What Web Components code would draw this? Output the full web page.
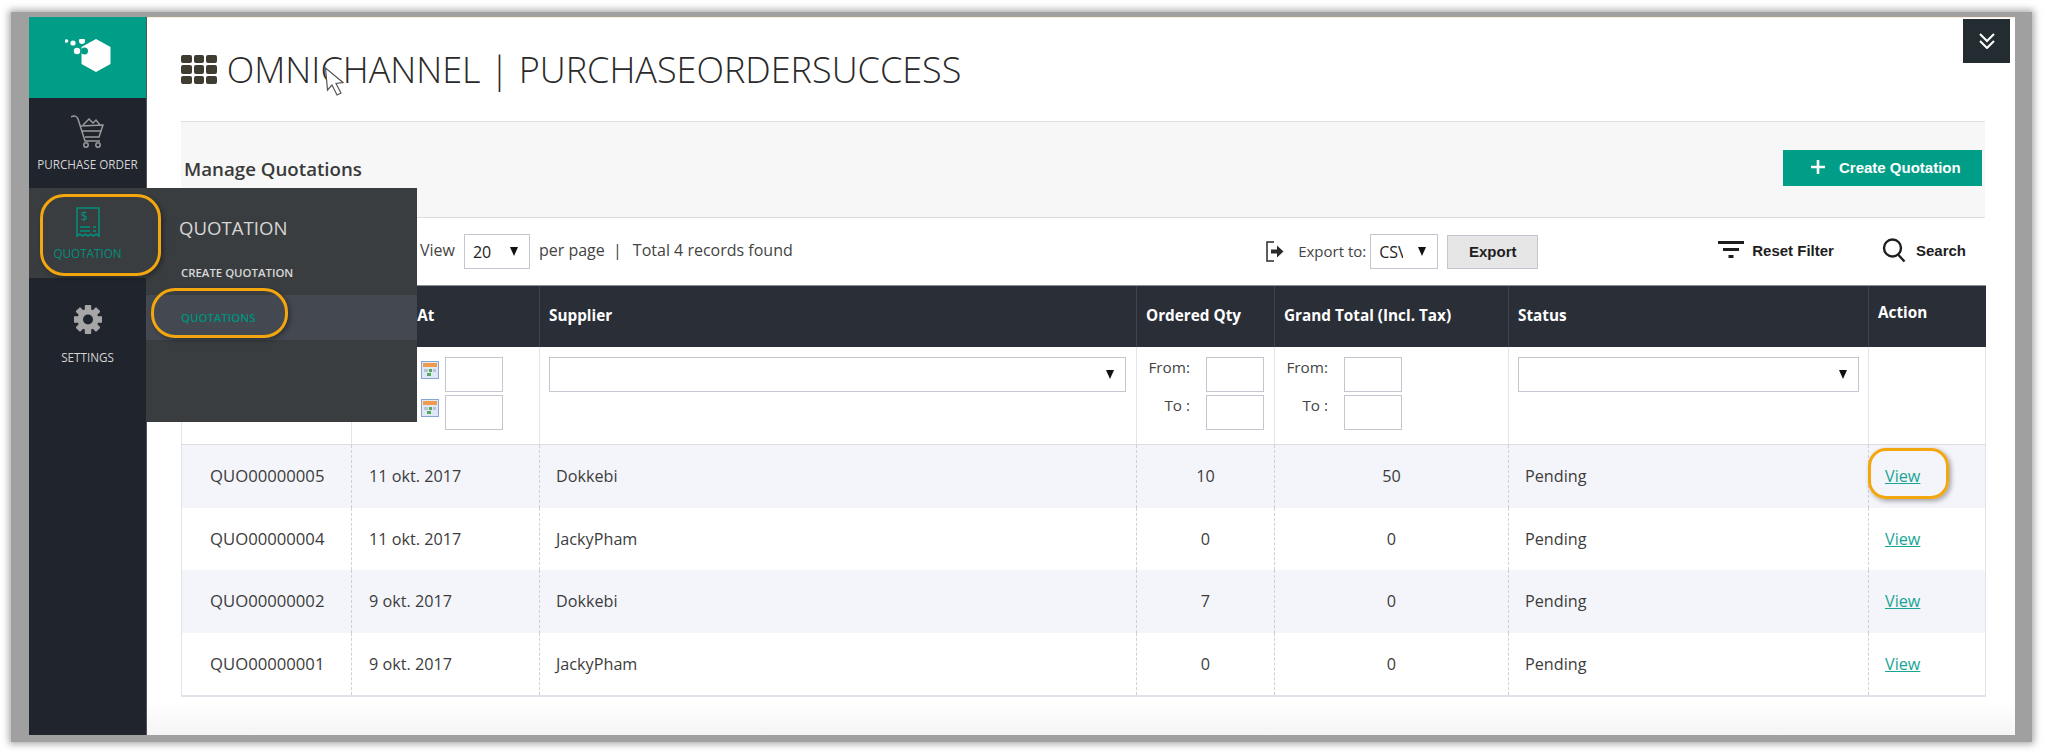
<!DOCTYPE html>
<html>
<head>
<meta charset="utf-8">
<title>Manage Quotations</title>
<style>
  html, body { margin: 0; padding: 0; background: #fff; }
  body { font-family: "Open Sans", sans-serif; color: #3c3c3c; overflow: hidden; }
</style>
</head>
<body>

<app-frame>
  <side-nav slot="nav">
    <nav-item style="--top:17px;--gap:9px">
      <svg slot="icon" width="33" height="33" viewBox="0 0 33 33" fill="none" stroke="#9b9b9b" stroke-width="1.5">
        <path d="M0 2c3-2 6-1 7 2l7 22h15"/>
        <path d="M9 11l23-1-4 12H14"/>
        <path d="M12 10l6-6 4 4 3-3 4 5"/>
        <path d="M11 16h19"/>
        <circle cx="15" cy="30" r="2.2"/>
        <circle cx="27" cy="30" r="2.2"/>
      </svg>
      PURCHASE ORDER
    </nav-item>
    <nav-item active style="--top:19px;--gap:8px">
      <svg slot="icon" width="24" height="31" viewBox="0 0 24 31" fill="none" stroke="#00917c" stroke-width="1.5">
        <path d="M1 1h22v28l-2.75-1.8-2.75 1.8-2.75-1.8-2.75 1.8-2.75-1.8-2.75 1.8-2.75-1.8L1 29z"/>
        <text x="4.500" y="14" font-family="Open Sans" font-size="13" fill="#00917c" stroke="none">$</text>
        <path d="M4 20h10M4 24h10M17 20h3M17 24h3"/>
      </svg>
      QUOTATION
    </nav-item>
    <nav-item style="--top:27px;--gap:16px">
      <svg slot="icon" width="28" height="29" viewBox="-14 -14.5 28 29" fill="#a6a6a6">
        <rect x="-3.2" y="-14.5" width="6.4" height="29" rx="1"/>
        <rect x="-3.2" y="-14.5" width="6.4" height="29" rx="1" transform="rotate(45)"/>
        <rect x="-3.2" y="-14.5" width="6.4" height="29" rx="1" transform="rotate(90)"/>
        <rect x="-3.2" y="-14.5" width="6.4" height="29" rx="1" transform="rotate(135)"/>
        <circle r="10.5"/>
        <circle r="5" fill="#20242d"/>
      </svg>
      SETTINGS
    </nav-item>
    <fly-menu slot="fly" heading="QUOTATION">
      <fly-link>CREATE QUOTATION</fly-link>
      <fly-link active>QUOTATIONS</fly-link>
    </fly-menu>
  </side-nav>

  <page-title>OMNICHANNEL | PURCHASEORDERSUCCESS</page-title>
  <panel-head>Manage Quotations</panel-head>
  <tool-bar></tool-bar>
  <quote-table></quote-table>

  <toggle-button slot="over"></toggle-button>
  <mouse-cursor slot="over"></mouse-cursor>
  <call-out slot="over" style="left:11px;top:177px;width:121px;height:82px;border-radius:24px"></call-out>
  <call-out slot="over" style="left:122px;top:271px;width:137px;height:50px;border-radius:24px"></call-out>
  <call-out slot="over" style="left:1839px;top:431px;width:81px;height:51px;border-radius:18px"></call-out>
</app-frame>

<script>
// frame = grey screenshot border, sidebar on the left, page content on the right
class AppFrame extends HTMLElement {
  constructor() {
    super();
    this.attachShadow({ mode: "open" });
    this.shadowRoot.innerHTML = `
      <style>
        :host {
          display: block;
          margin: 12px 13px 10px 11px;
          padding: 5px 17px 7px 18px;
          background: #a0a0a0;
          box-shadow: 0 0 7px 2px rgba(110,110,110,.6);
        }
        #app {
          position: relative;
          display: flex;
          height: 718px;
        }
        #main {
          flex: 1;
          min-width: 0;
          box-sizing: border-box;
          padding: 0 30px 0 34px;
          border-top: 1px solid #fbeed5;
          background: linear-gradient(#fff 683px, #f5f5f5 100%);
        }
      </style>
      <div id="app">
        <slot name="nav"></slot>
        <div id="main"><slot></slot></div>
        <slot name="over"></slot>
      </div>
    `;
  }
}

class SideNav extends HTMLElement {
  constructor() {
    super();
    this.attachShadow({ mode: "open" });
    this.shadowRoot.innerHTML = `
      <style>
        :host {
          display: block;
          position: relative;
          flex: none;
          width: 118px;
          box-sizing: border-box;
          background: #20242d;
          border-right: 1px solid #50545a;
        }
        #logo {
          height: 81px;
          background: #009e87;
          display: flex;
          align-items: center;
          justify-content: center;
        }
      </style>
      <div id="logo">
        <svg width="46" height="33" viewBox="0 0 46 33" fill="#fff" style="margin-left:1px;margin-bottom:4px">
          <path d="M31 0l14.5 8v17L31 33l-14.500-8V8z"/>
          <circle cx="19.500" cy="12" r="3.500" fill="#009e87"/>
          <circle cx="1.500" cy="2" r="1.800"/>
          <circle cx="8" cy="4" r="2.600"/>
          <circle cx="17" cy="2" r="3"/>
          <circle cx="12" cy="12" r="3.200"/>
        </svg>
      </div>
      <slot></slot>
      <slot name="fly"></slot>
    `;
  }
}

class NavItem extends HTMLElement {
  constructor() {
    super();
    this.attachShadow({ mode: "open" });
    this.shadowRoot.innerHTML = `
      <style>
        :host {
          display: flex;
          flex-direction: column;
          align-items: center;
          box-sizing: border-box;
          height: 90px;
          padding-top: var(--top, 17px);
          font: 400 11.700px/14px "Open Sans", sans-serif;
          color: #d4d4d4;
          white-space: nowrap;
        }
        :host([active]) {
          background: #3a3d40;
          color: #00917c;
        }
        ::slotted(svg) { display: block; margin-bottom: var(--gap, 8px); }
      </style>
      <slot name="icon"></slot>
      <slot></slot>
    `;
  }
}

class FlyMenu extends HTMLElement {
  constructor() {
    super();
    this.attachShadow({ mode: "open" });
    this.shadowRoot.innerHTML = `
      <style>
        :host {
          position: absolute;
          left: 117px;
          top: 171px;
          width: 271px;
          height: 234px;
          box-sizing: border-box;
          padding-top: 28px;
          background: #3a3d40;
          z-index: 5;
        }
        h2 {
          margin: 0 0 10px 33px;
          font: 400 18.600px/24px "Open Sans", sans-serif;
          color: #d6d6d6;
        }
      </style>
      <h2></h2>
      <slot></slot>
    `;
    this.shadowRoot.querySelector("h2").textContent = this.getAttribute("heading");
  }
}

class FlyLink extends HTMLElement {
  constructor() {
    super();
    this.attachShadow({ mode: "open" });
    this.shadowRoot.innerHTML = `
      <style>
        :host {
          display: flex;
          align-items: center;
          height: 45px;
          padding-left: 35px;
          font: 600 11.400px/14px "Open Sans", sans-serif;
          color: #d8d8d8;
        }
        :host([active]) { background: #444850; color: #00917c; }
      </style>
      <slot></slot>
    `;
  }
}

class PageTitle extends HTMLElement {
  constructor() {
    super();
    this.attachShadow({ mode: "open" });
    this.shadowRoot.innerHTML = `
      <style>
        :host {
          display: flex;
          align-items: center;
          gap: 10px;
          height: 103px;
          font: 300 36px/40px "Open Sans", sans-serif;
          color: #2a2a2a;
          white-space: nowrap;
        }
        #grid {
          display: grid;
          grid-template-columns: repeat(3, 10.600px);
          grid-auto-rows: 8.600px;
          gap: 2px;
          flex: none;
        }
        #grid i { background: #3f3c32; border-radius: 2px; }
      </style>
      <div id="grid"><i></i><i></i><i></i><i></i><i></i><i></i><i></i><i></i><i></i></div>
      <slot></slot>
    `;
  }
}

class PanelHead extends HTMLElement {
  constructor() {
    super();
    this.attachShadow({ mode: "open" });
    this.shadowRoot.innerHTML = `
      <style>
        :host {
          display: flex;
          align-items: center;
          justify-content: space-between;
          box-sizing: border-box;
          height: 97px;
          padding: 0 3px 1px 3px;
          background: #f7f7f7;
          border-top: 1px solid #dcdce2;
          border-bottom: 1px solid #dcdce2;
          font: 600 18.700px/24px "Open Sans", sans-serif;
          color: #3a3a3a;
        }
        button {
          display: flex;
          align-items: center;
          box-sizing: border-box;
          width: 199px;
          height: 36px;
          margin-bottom: 2px;
          padding: 0 0 2px 28px;
          gap: 14px;
          border: 0;
          background: #009e87;
          color: #fff;
          font: 700 15px "Liberation Sans", sans-serif;
        }
      </style>
      <slot></slot>
      <button>
        <svg width="14" height="14" viewBox="0 0 14 14" stroke="#fff" stroke-width="2.600"><path d="M7 0v14M0 7h14"/></svg>
        Create Quotation
      </button>
    `;
  }
}

class DropBox extends HTMLElement {
  constructor() {
    super();
    this.attachShadow({ mode: "open" });
    this.shadowRoot.innerHTML = `
      <style>
        :host {
          display: flex;
          align-items: center;
          box-sizing: border-box;
          height: 35px;
          padding: 0 11px 0 8px;
          border: 1px solid #c4c6cf;
          background: #fff;
          font: 400 16px "Open Sans", sans-serif;
          color: #222;
        }
        #val { flex: 1; overflow: hidden; white-space: nowrap; min-width: 0; }
        svg { flex: none; margin-left: 8px; }
      </style>
      <span id="val"><slot></slot></span>
      <svg width="8" height="9" viewBox="0 0 8 9"><path d="M0 0h8L4 9z" fill="#111"/></svg>
    `;
  }
}

class ToolBar extends HTMLElement {
  constructor() {
    super();
    this.attachShadow({ mode: "open" });
    this.shadowRoot.innerHTML = `
      <style>
        :host {
          display: flex;
          align-items: center;
          box-sizing: border-box;
          height: 67px;
          padding: 0 19px 0 239px;
          font: 400 16px "Open Sans", sans-serif;
          color: #444;
          white-space: nowrap;
        }
        .gap { flex: 1; }
        .lift { margin-bottom: 3px; }
        .tool {
          display: flex;
          align-items: center;
          margin-bottom: 3px;
          font: 700 15px "Liberation Sans", sans-serif;
          color: #1e1e1e;
        }
        #export {
          box-sizing: border-box;
          width: 91px;
          height: 34px;
          margin-left: 9px;
          border: 1px solid #c4c6cf;
          background: #e6e6e6;
          font: 700 15px "Liberation Sans", sans-serif;
          color: #1e1e1e;
        }
        #to { font-size: 15px; margin: 0 4px 2px 14px; }
        #csv { display: inline-block; width: 24px; overflow: hidden; vertical-align: bottom; }
      </style>
      <span class="lift">View</span>
      <drop-box style="width:66px;margin:0 9px"><span>20</span></drop-box>
      <span class="lift">per page &nbsp;|&nbsp;&nbsp;&thinsp;Total 4 records found</span>
      <span class="gap"></span>
      <svg width="18" height="21" viewBox="0 0 18 21" fill="none" stroke="#2a2a2a" stroke-width="1.500">
        <path d="M8 1H1v19h7"/>
        <path d="M5 8.500h6V4.500l6.500 6-6.500 6v-4H5z" fill="#2a2a2a" stroke="none"/>
      </svg>
      <span id="to">Export to:</span>
      <drop-box style="width:68px"><span id="csv">CSV</span></drop-box>
      <button id="export">Export</button>
      <span class="tool" style="margin-left:180px">
        <svg width="26" height="18" viewBox="0 0 26 18" fill="#1e1e1e" style="margin-right:8px">
          <rect width="26" height="3"/><rect x="5" y="7" width="16" height="3"/><rect x="10.500" y="14" width="5" height="3"/>
        </svg>
        Reset Filter
      </span>
      <span class="tool" style="margin-left:48px">
        <svg width="24" height="24" viewBox="0 0 24 24" fill="none" stroke="#1e1e1e" stroke-width="2.400" style="margin-right:10px">
          <circle cx="10.500" cy="10" r="8.500"/><path d="M16.500 17l6 6.500"/>
        </svg>
        Search
      </span>
    `;
  }
}

class FilterRange extends HTMLElement {
  constructor() {
    super();
    this.attachShadow({ mode: "open" });
    this.shadowRoot.innerHTML = `
      <style>
        :host {
          display: grid;
          grid-template-columns: 53px 58px;
          column-gap: 16px;
          row-gap: 3px;
          font: 400 15.300px/20px "Open Sans", sans-serif;
          color: #444;
        }
        span { text-align: right; }
        input {
          box-sizing: border-box;
          width: 58px;
          height: 35px;
          margin: 0;
          border: 1px solid #c4c6cf;
          background: #fff;
        }
      </style>
      <span>From:</span><input>
      <span>To :</span><input>
    `;
  }
}

class DateRange extends HTMLElement {
  constructor() {
    super();
    this.attachShadow({ mode: "open" });
    const cal = `
      <svg width="18" height="18" viewBox="0 0 18 18">
        <rect x=".5" y=".5" width="17" height="17" fill="#dfe8f4" stroke="#86a5d2"/>
        <rect x="2" y="2" width="14" height="4" fill="#ef9a4c"/>
        <rect x="3" y="8" width="4" height="3" fill="#b7c4d4"/>
        <rect x="8" y="8" width="3" height="3" fill="#56a85c"/>
        <rect x="12" y="8" width="3" height="3" fill="#b7c4d4"/>
        <rect x="6" y="12" width="4" height="3" fill="#56a85c"/>
      </svg>`;
    this.shadowRoot.innerHTML = `
      <style>
        :host {
          display: grid;
          grid-template-columns: 18px 58px;
          column-gap: 6px;
          row-gap: 3px;
          padding-left: 69px;
        }
        svg { margin-top: 4px; }
        input {
          box-sizing: border-box;
          width: 58px;
          height: 35px;
          margin: 0;
          border: 1px solid #c4c6cf;
          background: #fff;
        }
      </style>
      ${cal}<input>
      ${cal}<input>
    `;
  }
}

class QuoteTable extends HTMLElement {
  constructor() {
    super();
    this.attachShadow({ mode: "open" });

    const rows = [
      ["QUO00000005", "11 okt. 2017", "Dokkebi", "10", "50", "Pending"],
      ["QUO00000004", "11 okt. 2017", "JackyPham", "0", "0", "Pending"],
      ["QUO00000002", "9 okt. 2017", "Dokkebi", "7", "0", "Pending"],
      ["QUO00000001", "9 okt. 2017", "JackyPham", "0", "0", "Pending"],
    ];

    const body = rows
      .map(
        (r) => `
        <tr class="row">
          <td class="id">${r[0]}</td>
          <td class="date">${r[1]}</td>
          <td>${r[2]}</td>
          <td class="num">${r[3]}</td>
          <td class="num">${r[4]}</td>
          <td>${r[5]}</td>
          <td><a href="#">View</a></td>
        </tr>`
      )
      .join("");

    this.shadowRoot.innerHTML = `
      <style>
        :host { display: block; }
        table {
          table-layout: fixed;
          width: 1804px;
          border-collapse: collapse;
          font: 400 16.200px/22px "Open Sans", sans-serif;
          color: #3c3c3c;
        }
        th {
          box-sizing: border-box;
          height: 61px;
          padding: 0 0 3px 9px;
          background: #2a2e37;
          border-left: 1px solid #3f434c;
          border-top: 1px solid #8b8e95;
          text-align: left;
          font: 700 15.300px/20px "Open Sans", sans-serif;
          color: #fff;
          white-space: nowrap;
        }
        th.action { padding-bottom: 9px; }
        th.created { padding-left: 1px; }
        .filter td {
          height: 98px;
          box-sizing: border-box;
          padding: 10px 0 0 0;
          vertical-align: top;
          border-left: 1px solid #e4e5ea;
          border-right: 1px solid #e4e5ea;
          border-bottom: 1px solid #dcdce2;
        }
        .row td {
          height: 62.600px;
          padding: 0 0 0 16px;
          border-left: 1px dashed #d0d0d0;
        }
        .row td:first-child { border-left: 1px solid #dfe2ea; }
        .row td:last-child { border-right: 1px solid #dfe2ea; }
        .row:nth-child(even) td { background: #f4f5fa; }
        .row:last-child td { border-bottom: 2px solid #e0e3ea; }
        .row td.id { padding-left: 28px; font-size: 16.700px; }
        .row td.date { padding-left: 17px; }
        .row td.num { padding-left: 0; text-align: center; }
        a { color: #18a594; }
      </style>
      <table>
        <colgroup>
          <col style="width:170px"><col style="width:188px"><col style="width:597px">
          <col style="width:138px"><col style="width:234px"><col style="width:360px"><col style="width:117px">
        </colgroup>
        <thead>
          <tr>
            <th></th><th class="created">Created At</th><th>Supplier</th><th>Ordered Qty</th>
            <th>Grand Total (Incl. Tax)</th><th>Status</th><th class="action">Action</th>
          </tr>
        </thead>
        <tbody>
          <tr class="filter">
            <td></td>
            <td><date-range></date-range></td>
            <td style="padding-left:9px;padding-right:10px"><drop-box></drop-box></td>
            <td style="padding-left:0"><filter-range></filter-range></td>
            <td style="padding-left:0"><filter-range></filter-range></td>
            <td style="padding-left:9px;padding-right:9px"><drop-box></drop-box></td>
            <td></td>
          </tr>
          ${body}
        </tbody>
      </table>
    `;
  }
}

class ToggleButton extends HTMLElement {
  constructor() {
    super();
    this.attachShadow({ mode: "open" });
    this.shadowRoot.innerHTML = `
      <style>
        :host {
          position: absolute;
          right: 5px;
          top: 2px;
          width: 47px;
          height: 44px;
          display: flex;
          align-items: center;
          justify-content: center;
          background: #232d31;
        }
      </style>
      <svg width="18" height="16" viewBox="0 0 18 16" fill="none" stroke="#fff" stroke-width="2">
        <path d="M2 1l7 7 7-7M2 8l7 7 7-7"/>
      </svg>
    `;
  }
}

// the mouse pointer left in the screenshot
class MouseCursor extends HTMLElement {
  constructor() {
    super();
    this.attachShadow({ mode: "open" });
    this.shadowRoot.innerHTML = `
      <style>
        :host { position: absolute; left: 295px; top: 50px; width: 20px; height: 29px; }
      </style>
      <svg width="20" height="29" viewBox="0 0 20 29">
        <path d="M1.500 1l2 22 4.500-5 5 10 4-2-5-9.500 7-1z" fill="#fff" stroke="#555" stroke-width="1.200"/>
      </svg>
    `;
  }
}

// orange annotation ring drawn on top of the screenshot
class CallOut extends HTMLElement {
  constructor() {
    super();
    this.attachShadow({ mode: "open" });
    this.shadowRoot.innerHTML = `
      <style>
        :host {
          position: absolute;
          box-sizing: border-box;
          border: 3px solid #f3a60e;
          box-shadow: 2px 2px 5px rgba(0,0,0,.35);
          z-index: 10;
        }
      </style>
    `;
  }
}

customElements.define("app-frame", AppFrame);
customElements.define("side-nav", SideNav);
customElements.define("nav-item", NavItem);
customElements.define("fly-menu", FlyMenu);
customElements.define("fly-link", FlyLink);
customElements.define("page-title", PageTitle);
customElements.define("panel-head", PanelHead);
customElements.define("drop-box", DropBox);
customElements.define("tool-bar", ToolBar);
customElements.define("filter-range", FilterRange);
customElements.define("date-range", DateRange);
customElements.define("quote-table", QuoteTable);
customElements.define("toggle-button", ToggleButton);
customElements.define("mouse-cursor", MouseCursor);
customElements.define("call-out", CallOut);
</script>
</body>
</html>
